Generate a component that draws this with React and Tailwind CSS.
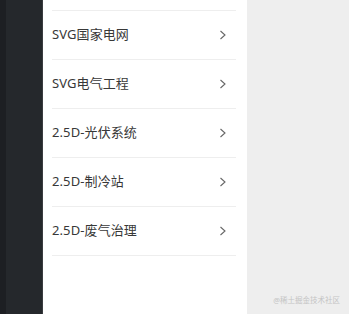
import React from 'react';

const items = ['SVG国家电网', 'SVG电气工程', '2.5D-光伏系统', '2.5D-制冷站', '2.5D-废气治理'];

function Chevron() {
    return (
        <svg width="8" height="10" viewBox="0 0 8 10" fill="none" className="text-[#666]">
            <path d="M1.5 1 L6 5 L1.5 9" stroke="currentColor" strokeWidth="1.1" />
        </svg>
    );
}

export default function App() {
    return (
        <div
            className="flex w-[349px] h-[314px] overflow-hidden bg-[#eeeeee]"
            style={{ fontFamily: '"Noto Sans", "Noto Sans CJK SC", sans-serif' }}
        >
            <div className="flex w-[43px] h-full">
                <div className="w-[6px] h-full bg-[#1d1f23]" />
                <div className="flex-1 h-full bg-[#25282c]" />
                <div className="w-px h-full bg-[#3a3c40]" />
            </div>
            <div className="w-[204px] h-full bg-white pl-[9px] pr-[11px]">
                <div className="h-[10px]" />
                <ul className="border-t border-[#eeeeee]">
                    {items.map((item) => (
                        <li
                            key={item}
                            className="flex items-center justify-between h-[49px] border-b border-[#eeeeee] pr-[9px]"
                        >
                            <span className="text-[13px] text-[#383838] leading-none tracking-[0.1px] -mt-[1px]">{item}</span>
                            <Chevron />
                        </li>
                    ))}
                </ul>
            </div>
            <div className="flex-1 h-full flex items-end justify-end pb-[10px] pr-[9px]">
                <span className="text-[7.5px] text-[#c4c4c4] leading-none">@稀土掘金技术社区</span>
            </div>
        </div>
    );
}
